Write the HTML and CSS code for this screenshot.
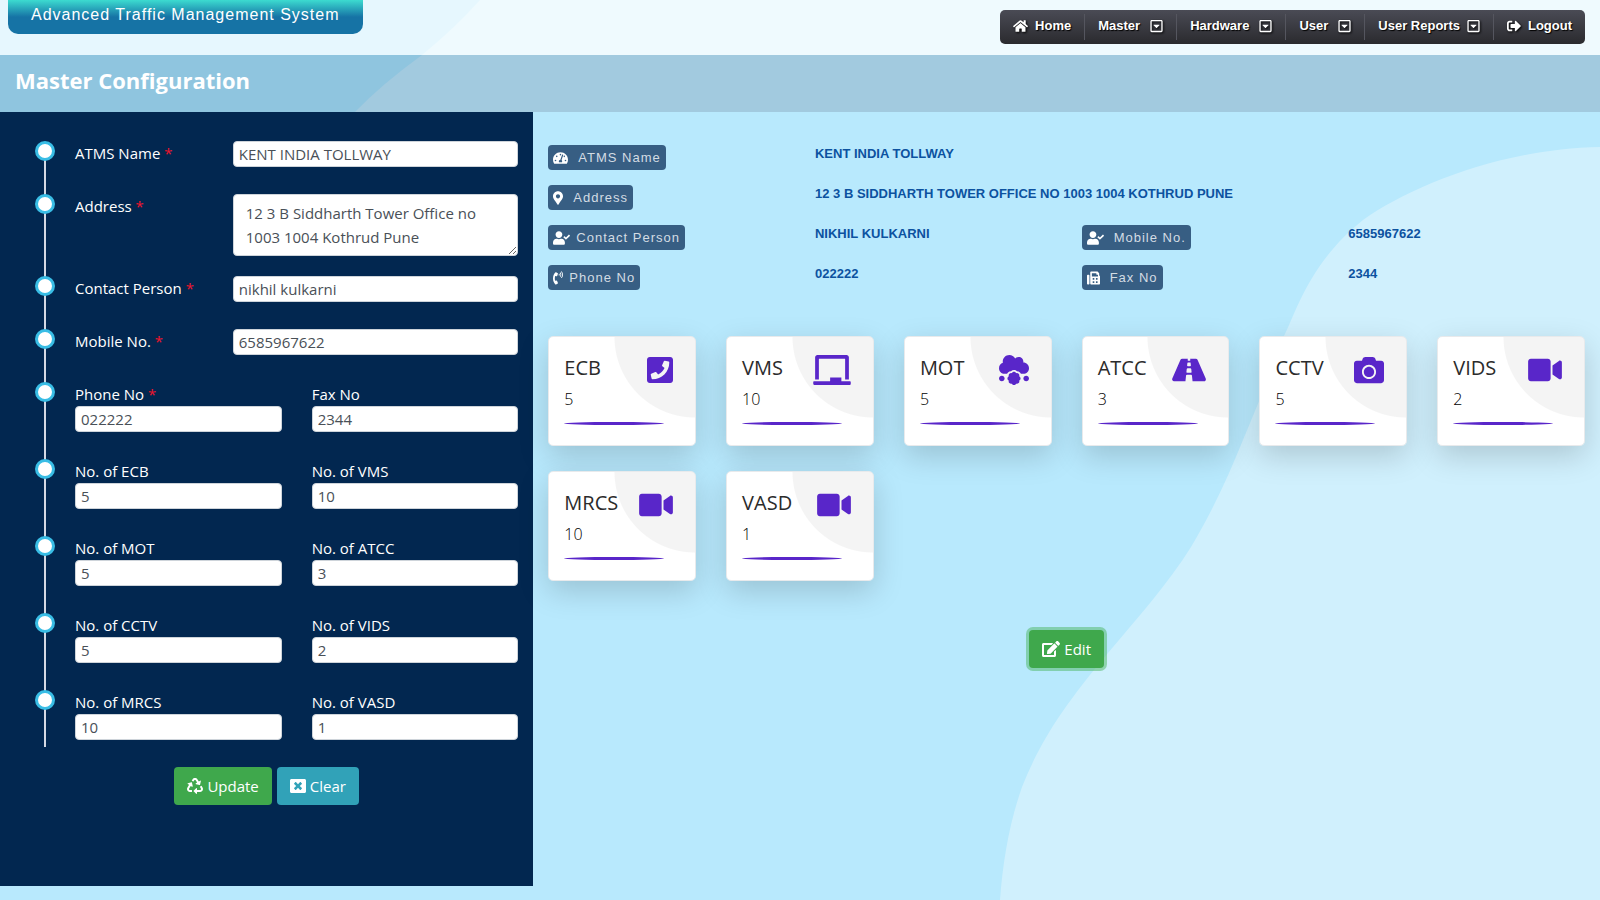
FILE: index.html
```html
<!DOCTYPE html>
<html lang="en">
<head>
<meta charset="utf-8">
<title>Master Configuration</title>
<link rel="stylesheet" href="styles.css">
</head>
<body>
<svg class="sprite" aria-hidden="true">
  <symbol id="i-home" viewBox="0 0 576 512"><path d="M280.37 148.26L96 300.11V464a16 16 0 0 0 16 16l112.06-.29a16 16 0 0 0 15.92-16V368a16 16 0 0 1 16-16h64a16 16 0 0 1 16 16v95.64a16 16 0 0 0 16 16.05L464 480a16 16 0 0 0 16-16V300L295.67 148.26a12.19 12.19 0 0 0-15.3 0zM571.6 251.47L488 182.56V44.05a12 12 0 0 0-12-12h-56a12 12 0 0 0-12 12v72.61L318.47 43a48 48 0 0 0-61 0L4.34 251.47a12 12 0 0 0-1.6 16.9l25.5 31A12 12 0 0 0 45.15 301l235.22-193.74a12.19 12.19 0 0 1 15.3 0L530.9 301a12 12 0 0 0 16.9-1.6l25.5-31a12 12 0 0 0-1.7-16.93z"/></symbol>
  <symbol id="i-caret" viewBox="0 0 448 512"><path d="M125.1 208h197.8c10.7 0 16.1 13 8.5 20.5l-98.9 98.3c-4.7 4.7-12.2 4.7-16.9 0l-98.9-98.3c-7.7-7.5-2.3-20.5 8.4-20.5zM448 80v352c0 26.5-21.5 48-48 48H48c-26.5 0-48-21.5-48-48V80c0-26.5 21.5-48 48-48h352c26.5 0 48 21.5 48 48zm-48 346V86c0-3.3-2.7-6-6-6H54c-3.3 0-6 2.7-6 6v340c0 3.3 2.7 6 6 6h340c3.3 0 6-2.7 6-6z"/></symbol>
  <symbol id="i-logout" viewBox="0 0 512 512"><path d="M497 273L329 441c-15 15-41 4.5-41-17v-96H152c-13.3 0-24-10.7-24-24v-96c0-13.3 10.7-24 24-24h136V88c0-21.4 25.9-32 41-17l168 168c9.3 9.4 9.3 24.6 0 34zM192 436v-40c0-6.6-5.4-12-12-12H96c-17.7 0-32-14.3-32-32V160c0-17.7 14.3-32 32-32h84c6.6 0 12-5.4 12-12V76c0-6.6-5.4-12-12-12H96c-53 0-96 43-96 96v192c0 53 43 96 96 96h84c6.6 0 12-5.4 12-12z"/></symbol>
  <symbol id="i-gauge" viewBox="0 0 576 512"><path d="M288 32C128.94 32 0 160.94 0 320c0 52.8 14.25 102.26 39.06 144.8 5.61 9.62 16.3 15.2 27.44 15.2h443c11.14 0 21.83-5.58 27.44-15.2C561.75 422.26 576 372.8 576 320c0-159.06-128.94-288-288-288zm0 64c14.71 0 26.58 10.13 30.32 23.65-1.11 2.26-2.64 4.23-3.45 6.67l-9.22 27.67c-5.13 3.49-10.97 6.01-17.64 6.01-17.67 0-32-14.33-32-32S270.33 96 288 96zM96 384c-17.67 0-32-14.33-32-32s14.33-32 32-32 32 14.33 32 32-14.33 32-32 32zm48-160c-17.67 0-32-14.33-32-32s14.33-32 32-32 32 14.33 32 32-14.33 32-32 32zm246.77-72.41l-61.33 184C343.13 347.33 352 364.54 352 384c0 11.72-3.38 22.55-8.88 32H232.88c-5.5-9.45-8.88-20.28-8.88-32 0-33.94 26.5-61.43 59.9-63.59l61.34-184.01c4.17-12.56 17.73-19.45 30.36-15.17 12.57 4.19 19.35 17.79 15.17 30.36zm14.66 57.2l15.52-46.55c3.47-1.29 7.13-2.23 11.05-2.23 17.67 0 32 14.33 32 32s-14.33 32-32 32c-11.38-.01-20.89-6.28-26.57-15.22zM480 384c-17.67 0-32-14.33-32-32s14.33-32 32-32 32 14.33 32 32-14.33 32-32 32z"/></symbol>
  <symbol id="i-marker" viewBox="0 0 384 512"><path d="M172.268 501.67C26.97 291.031 0 269.413 0 192 0 85.961 85.961 0 192 0s192 85.961 192 192c0 77.413-26.97 99.031-172.268 309.67-9.535 13.774-29.93 13.773-39.464 0zM192 272c44.183 0 80-35.817 80-80s-35.817-80-80-80-80 35.817-80 80 35.817 80 80 80z"/></symbol>
  <symbol id="i-user" viewBox="0 0 640 512"><path d="M224 256c70.7 0 128-57.3 128-128S294.7 0 224 0 96 57.3 96 128s57.3 128 128 128zm89.6 32h-16.7c-22.2 10.2-46.9 16-72.9 16s-50.6-5.8-72.9-16h-16.7C60.2 288 0 348.2 0 422.4V464c0 26.5 21.5 48 48 48h352c26.5 0 48-21.5 48-48v-41.6c0-74.2-60.2-134.4-134.4-134.4zm323-128.4l-27.8-28.1c-4.6-4.7-12.1-4.7-16.8-.1l-104.8 104-45.5-45.8c-4.6-4.7-12.1-4.7-16.8-.1l-28.1 27.9c-4.7 4.6-4.7 12.1-.1 16.8l81.7 82.3c4.6 4.7 12.1 4.7 16.8.1l141.3-140.2c4.6-4.7 4.7-12.2.1-16.8z"/></symbol>
  <symbol id="i-phone" viewBox="0 0 384 512"><path d="M97.333 506.966c-129.874-129.874-129.681-340.252 0-469.933 5.698-5.698 14.527-6.632 21.263-2.422l64.817 40.513a17.187 17.187 0 0 1 6.849 20.958l-32.408 81.021a17.188 17.188 0 0 1-17.669 10.719l-55.81-5.58c-21.051 58.261-20.612 122.471 0 179.515l55.811-5.581a17.188 17.188 0 0 1 17.669 10.719l32.408 81.022a17.188 17.188 0 0 1-6.849 20.958l-64.817 40.513a17.19 17.19 0 0 1-21.265-2.422zM247.126 95.473c11.832 20.047 11.832 45.008 0 65.055-3.95 6.693-13.108 7.959-18.718 2.581l-5.975-5.726c-3.911-3.748-4.793-9.622-2.261-14.41a32.063 32.063 0 0 0 0-29.945c-2.533-4.788-1.65-10.662 2.261-14.41l5.975-5.726c5.61-5.378 14.768-4.112 18.718 2.581zm91.787-91.187c60.14 71.604 60.092 175.882 0 247.428-4.474 5.327-12.53 5.746-17.552.933l-5.798-5.557c-4.56-4.371-4.977-11.529-.93-16.379 49.687-59.538 49.646-145.933 0-205.422-4.047-4.85-3.631-12.008.93-16.379l5.798-5.557c5.022-4.813 13.078-4.394 17.552.933zm-45.972 44.941c36.05 46.322 36.108 111.149 0 157.546-4.39 5.641-12.697 6.251-17.856 1.304l-5.818-5.579c-4.4-4.219-4.998-11.095-1.285-15.931 26.536-34.564 26.534-82.572 0-117.134-3.713-4.836-3.115-11.711 1.285-15.931l5.818-5.579c5.159-4.947 13.466-4.337 17.856 1.304z"/></symbol>
  <symbol id="i-fax" viewBox="0 0 512 512"><path fill-rule="evenodd" d="M64 128H32c-17.67 0-32 14.33-32 32v320c0 17.67 14.33 32 32 32h32c17.67 0 32-14.33 32-32V160c0-17.67-14.33-32-32-32zm416 32V77.25c0-8.49-3.37-16.62-9.37-22.63L425.37 9.37c-6-6-14.14-9.37-22.63-9.37H160c-17.67 0-32 14.33-32 32v448c0 17.67 14.33 32 32 32h320c17.67 0 32-14.33 32-32V192c0-17.67-14.33-32-32-32zM224 384h64v64h-64zM224 256h64v64h-64zM352 384h64v64h-64zM352 256h64v64h-64zM192 64h176v48c0 9 7 16 16 16h48v64H192z"/></symbol>
  <symbol id="i-ecb" viewBox="0 0 448 512"><path d="M400 32H48C21.49 32 0 53.49 0 80v352c0 26.51 21.49 48 48 48h352c26.51 0 48-21.49 48-48V80c0-26.51-21.49-48-48-48zM94 416c-7.033 0-13.057-4.873-14.616-11.627l-14.998-65a15 15 0 0 1 8.707-17.16l69.998-29.999a15 15 0 0 1 17.518 4.289l30.997 37.885c48.944-22.963 88.297-62.858 110.781-110.78l-37.886-30.997a15.001 15.001 0 0 1-4.289-17.518l30-69.998a15 15 0 0 1 17.16-8.707l65 14.998A14.997 14.997 0 0 1 384 126c0 160.292-129.945 290-290 290z"/></symbol>
  <symbol id="i-board" viewBox="0 0 640 512"><path d="M96 64h448v352h64V40c0-22.06-17.94-40-40-40H72C49.94 0 32 17.94 32 40v376h64V64zm528 384H480v-64H288v64H16c-8.84 0-16 7.16-16 16v32c0 8.84 7.16 16 16 16h608c8.84 0 16-7.16 16-16v-32c0-8.84-7.16-16-16-16z"/></symbol>
  <symbol id="i-cloud" viewBox="0 0 512 512"><path d="M48 352c-26.5 0-48 21.5-48 48s21.5 48 48 48 48-21.5 48-48-21.5-48-48-48zm416 0c-26.5 0-48 21.5-48 48s21.5 48 48 48 48-21.5 48-48-21.5-48-48-48zm-119 11.1c4.6-14.5 1.6-30.8-9.8-42.3-11.5-11.5-27.8-14.4-42.3-9.9-7-13.5-20.7-23-36.9-23s-29.9 9.5-36.9 23c-14.5-4.6-30.8-1.6-42.3 9.9-11.5 11.5-14.4 27.8-9.9 42.3-13.5 7-23 20.7-23 36.9s9.5 29.9 23 36.9c-4.6 14.5-1.6 30.8 9.9 42.3 8.2 8.2 18.9 12.3 29.7 12.3 4.3 0 8.5-1.1 12.6-2.5 7 13.5 20.7 23 36.9 23s29.9-9.5 36.9-23c4.1 1.3 8.3 2.5 12.6 2.5 10.8 0 21.5-4.1 29.7-12.3 11.5-11.5 14.4-27.8 9.8-42.3 13.5-7 23-20.7 23-36.9s-9.5-29.9-23-36.9zM512 224c0-53-43-96-96-96-.6 0-1.1.2-1.6.2 1.1-5.2 1.6-10.6 1.6-16.2 0-44.2-35.8-80-80-80-24.6 0-46.3 11.3-61 28.8C256.4 24.8 219.3 0 176 0 114.1 0 64 50.1 64 112c0 7.3.8 14.3 2.1 21.2C27.8 145.8 0 181.5 0 224c0 53 43 96 96 96h43.4c3.6-8 8.4-15.4 14.8-21.8 13.5-13.5 31.5-21.1 50.8-21.3 13.5-13.2 31.7-20.9 51-20.9s37.5 7.7 51 20.9c19.3.2 37.3 7.8 50.8 21.3 6.4 6.4 11.3 13.8 14.8 21.8H416c53 0 96-43 96-96z"/></symbol>
  <symbol id="i-road" viewBox="0 0 576 512"><path d="M573.19 402.67l-139.79-320C428.43 71.29 417.6 64 405.68 64h-97.59l2.45 23.16c.5 4.72-3.21 8.84-7.96 8.84h-29.16c-4.75 0-8.46-4.12-7.96-8.84L267.91 64h-97.59c-11.93 0-22.76 7.29-27.73 18.67L2.8 402.67C-6.45 423.86 8.31 448 30.54 448h196.84l10.31-97.68c.86-8.14 7.72-14.32 15.91-14.32h68.8c8.19 0 15.05 6.18 15.91 14.32L348.62 448h196.84c22.23 0 36.99-24.14 27.73-45.33zM260.4 135.16a8 8 0 0 1 7.96-7.16h39.29c4.09 0 7.53 3.09 7.96 7.16l4.6 43.58c.75 7.09-4.81 13.26-11.93 13.26h-40.54c-7.13 0-12.68-6.17-11.93-13.26l4.59-43.58zM315.64 304h-55.29c-9.5 0-16.91-8.23-15.91-17.68l5.07-48c.86-8.14 7.72-14.32 15.91-14.32h45.15c8.19 0 15.05 6.18 15.91 14.32l5.07 48c1 9.45-6.41 17.68-15.91 17.68z"/></symbol>
  <symbol id="i-camera" viewBox="0 0 512 512"><path d="M512 144v288c0 26.5-21.5 48-48 48H48c-26.5 0-48-21.5-48-48V144c0-26.5 21.5-48 48-48h88l12.3-32.9c7-18.7 24.9-31.1 44.9-31.1h125.5c20 0 37.9 12.4 44.9 31.1L376 96h88c26.5 0 48 21.5 48 48zM376 288c0-66.2-53.8-120-120-120s-120 53.8-120 120 53.8 120 120 120 120-53.8 120-120zm-32 0c0 48.5-39.5 88-88 88s-88-39.5-88-88 39.5-88 88-88 88 39.5 88 88z"/></symbol>
  <symbol id="i-video" viewBox="0 0 576 512"><path d="M336.2 64H47.8C21.4 64 0 85.4 0 111.8v288.4C0 426.6 21.4 448 47.8 448h288.4c26.4 0 47.8-21.4 47.8-47.8V111.8c0-26.4-21.4-47.8-47.8-47.8zm189.4 37.7L416 177.3v157.4l109.6 75.5c21.2 14.6 50.4-.3 50.4-25.8V127.5c0-25.4-29.1-40.4-50.4-25.8z"/></symbol>
  <symbol id="i-edit" viewBox="0 0 576 512"><path d="M402.6 83.2l90.2 90.2c3.8 3.8 3.8 10 0 13.8L274.4 405.6l-92.8 10.3c-12.4 1.4-22.9-9.1-21.5-21.5l10.3-92.8L388.8 83.2c3.8-3.8 10-3.8 13.8 0zm162-22.9l-48.8-48.8c-15.2-15.2-39.9-15.2-55.2 0l-35.4 35.4c-3.8 3.8-3.8 10 0 13.8l90.2 90.2c3.8 3.8 10 3.8 13.8 0l35.4-35.4c15.2-15.3 15.2-40 0-55.2zM384 346.2V448H64V128h229.8c3.2 0 6.2-1.3 8.5-3.5l40-40c7.6-7.6 2.2-20.5-8.5-20.5H48C21.5 64 0 85.5 0 112v352c0 26.5 21.5 48 48 48h352c26.5 0 48-21.5 48-48V306.2c0-10.7-12.9-16-20.5-8.5l-40 40c-2.2 2.3-3.5 5.3-3.5 8.5z"/></symbol>
  <symbol id="i-recycle" viewBox="0 0 512 512"><path d="M184.561 261.903c3.232 13.997-12.123 24.635-24.068 17.168l-40.736-25.455-50.867 81.402C55.606 356.273 70.96 384 96.012 384H148c6.627 0 12 5.373 12 12v40c0 6.627-5.373 12-12 12H96.115c-75.334 0-121.302-83.048-81.408-146.88l50.822-81.388-40.725-25.448c-12.081-7.547-8.966-25.961 4.879-29.158l110.237-25.45c8.611-1.988 17.201 3.381 19.189 11.99l25.452 110.237zm98.561-182.915l41.289 66.076-40.74 25.457c-12.051 7.528-9 25.953 4.879 29.158l110.237 25.45c8.672 1.999 17.215-3.438 19.189-11.99l25.45-110.237c3.197-13.844-11.99-24.719-24.068-17.168l-40.687 25.424-41.263-66.082c-37.521-60.033-125.209-60.171-162.816 0l-17.963 28.766c-3.51 5.62-1.8 13.021 3.82 16.533l33.919 21.195c5.62 3.512 13.024 1.803 16.536-3.817l17.961-28.743c12.712-20.341 41.973-19.676 54.257-.022zM497.288 301.12l-27.515-44.065c-3.511-5.623-10.916-7.334-16.538-3.821l-33.861 21.159c-5.62 3.512-7.33 10.915-3.818 16.536l27.564 44.112c13.257 21.211-2.057 48.96-27.136 48.96H320V336.02c0-14.213-17.242-21.383-27.313-11.313l-80 79.981c-6.249 6.248-6.249 16.379 0 22.627l80 79.989C302.689 517.308 320 510.3 320 495.989V448h95.88c75.274 0 121.335-82.997 81.408-146.88z"/></symbol>
  <symbol id="i-close" viewBox="0 0 512 512"><path d="M464 32H48C21.5 32 0 53.5 0 80v352c0 26.5 21.5 48 48 48h416c26.5 0 48-21.5 48-48V80c0-26.5-21.5-48-48-48zm-83.6 290.5c4.8 4.8 4.8 12.6 0 17.4l-40.5 40.5c-4.8 4.8-12.6 4.8-17.4 0L256 313.3l-66.5 67.1c-4.8 4.8-12.6 4.8-17.4 0l-40.5-40.5c-4.8-4.8-4.8-12.6 0-17.4l67.1-66.5-67.1-66.5c-4.8-4.8-4.8-12.6 0-17.4l40.5-40.5c4.8-4.8 12.6-4.8 17.4 0l66.5 67.1 66.5-67.1c4.8-4.8 12.6-4.8 17.4 0l40.5 40.5c4.8 4.8 4.8 12.6 0 17.4L313.3 256l67.1 66.5z"/></symbol>
</svg>

<div class="masthead">
  <svg class="wave" viewBox="0 0 1600 112" preserveAspectRatio="none" aria-hidden="true"><path d="M480 0Q455 28 422 55Q382 84 355 112H1600V0Z"/></svg>
  <header class="topbar">
    <div class="brand">Advanced Traffic Management System</div>
    <nav class="menu">
      <a href="#"><svg class="ic w15"><use href="#i-home"/></svg>Home</a>
      <a href="#" class="drop">Master<svg class="ic w13"><use href="#i-caret"/></svg></a>
      <a href="#" class="drop">Hardware<svg class="ic w13"><use href="#i-caret"/></svg></a>
      <a href="#" class="drop">User<svg class="ic w13"><use href="#i-caret"/></svg></a>
      <a href="#">User Reports<svg class="ic w13"><use href="#i-caret"/></svg></a>
      <a href="#"><svg class="ic w14"><use href="#i-logout"/></svg>Logout</a>
    </nav>
  </header>
  <div class="titlebar"><h1>Master Configuration</h1></div>
</div>

<main class="content">
  <svg class="wave" viewBox="0 0 1600 788" preserveAspectRatio="none" aria-hidden="true"><path d="M1600 35C1500 37 1410 75 1363 108C1310 150 1296 200 1284 224C1272 258 1258 292 1243 328C1228 365 1212 400 1191 435C1168 472 1138 505 1108 541C1062 596 1040 630 1022 675C1009 712 1003 750 1000 788H1600Z"/></svg>

  <form class="panel">
    <ul class="timeline">
      <li class="line-row"><label for="name">ATMS Name <span class="req">*</span></label><div class="cell"><input id="name" type="text" value="KENT INDIA TOLLWAY"></div></li>
      <li class="line-row"><label for="addr">Address <span class="req">*</span></label><div class="cell"><textarea id="addr" rows="2">12 3 B Siddharth Tower Office no 1003 1004 Kothrud Pune</textarea></div></li>
      <li class="line-row"><label for="person">Contact Person <span class="req">*</span></label><div class="cell"><input id="person" type="text" value="nikhil kulkarni"></div></li>
      <li class="line-row"><label for="mobile">Mobile No. <span class="req">*</span></label><div class="cell"><input id="mobile" type="text" value="6585967622"></div></li>
      <li class="pair-row"><div class="cell"><label for="phone">Phone No <span class="req">*</span></label><input id="phone" type="text" value="022222"></div><div class="cell"><label for="fax">Fax No</label><input id="fax" type="text" value="2344"></div></li>
      <li class="pair-row"><div class="cell"><label for="ecb">No. of ECB</label><input id="ecb" type="text" value="5"></div><div class="cell"><label for="vms">No. of VMS</label><input id="vms" type="text" value="10"></div></li>
      <li class="pair-row"><div class="cell"><label for="mot">No. of MOT</label><input id="mot" type="text" value="5"></div><div class="cell"><label for="atcc">No. of ATCC</label><input id="atcc" type="text" value="3"></div></li>
      <li class="pair-row"><div class="cell"><label for="cctv">No. of CCTV</label><input id="cctv" type="text" value="5"></div><div class="cell"><label for="vids">No. of VIDS</label><input id="vids" type="text" value="2"></div></li>
      <li class="pair-row"><div class="cell"><label for="mrcs">No. of MRCS</label><input id="mrcs" type="text" value="10"></div><div class="cell"><label for="vasd">No. of VASD</label><input id="vasd" type="text" value="1"></div></li>
    </ul>
    <div class="actions">
      <button type="button" class="btn green"><svg class="ic w16"><use href="#i-recycle"/></svg>Update</button>
      <button type="button" class="btn teal"><svg class="ic w16"><use href="#i-close"/></svg>Clear</button>
    </div>
  </form>

  <section class="overview">
    <dl class="facts">
      <dt><span class="badge wide"><svg class="ic w15"><use href="#i-gauge"/></svg>ATMS Name</span></dt><dd class="span">KENT INDIA TOLLWAY</dd>
      <dt><span class="badge wide"><svg class="ic w10"><use href="#i-marker"/></svg>Address</span></dt><dd class="span">12 3 B SIDDHARTH TOWER OFFICE NO 1003 1004 KOTHRUD PUNE</dd>
      <dt><span class="badge"><svg class="ic w17"><use href="#i-user"/></svg>Contact Person</span></dt><dd>NIKHIL KULKARNI</dd>
      <dt><span class="badge wide"><svg class="ic w17"><use href="#i-user"/></svg>Mobile No.</span></dt><dd>6585967622</dd>
      <dt><span class="badge"><svg class="ic w10"><use href="#i-phone"/></svg>Phone No</span></dt><dd>022222</dd>
      <dt><span class="badge wide"><svg class="ic w13"><use href="#i-fax"/></svg>Fax No</span></dt><dd>2344</dd>
    </dl>
    <div class="cards">
      <article class="card"><div class="text"><h2>ECB</h2><p>5</p></div><svg class="pic p26"><use href="#i-ecb"/></svg><span class="bar"></span></article>
      <article class="card"><div class="text"><h2>VMS</h2><p>10</p></div><svg class="pic p38"><use href="#i-board"/></svg><span class="bar"></span></article>
      <article class="card"><div class="text"><h2>MOT</h2><p>5</p></div><svg class="pic p30"><use href="#i-cloud"/></svg><span class="bar"></span></article>
      <article class="card"><div class="text"><h2>ATCC</h2><p>3</p></div><svg class="pic p34"><use href="#i-road"/></svg><span class="bar"></span></article>
      <article class="card"><div class="text"><h2>CCTV</h2><p>5</p></div><svg class="pic p30"><use href="#i-camera"/></svg><span class="bar"></span></article>
      <article class="card"><div class="text"><h2>VIDS</h2><p>2</p></div><svg class="pic p34"><use href="#i-video"/></svg><span class="bar"></span></article>
      <article class="card"><div class="text"><h2>MRCS</h2><p>10</p></div><svg class="pic p34"><use href="#i-video"/></svg><span class="bar"></span></article>
      <article class="card"><div class="text"><h2>VASD</h2><p>1</p></div><svg class="pic p34"><use href="#i-video"/></svg><span class="bar"></span></article>
    </div>
    <button type="button" class="btn green ring"><svg class="ic w18"><use href="#i-edit"/></svg>Edit</button>
  </section>
</main>
</body>
</html>
```
FILE: styles.css
```css
*, *::before { box-sizing: border-box; }

body {
  margin: 0;
  min-height: 100vh;
  display: flex;
  flex-direction: column;
  background: #b8e9fd;
  color: #212529;
  font: 15px/24px "Segoe UI", "Open Sans", sans-serif;
}

h1, h2, p, ul, dl, dd { margin: 0; padding: 0; }

.sprite { position: absolute; width: 0; height: 0; }

.wave {
  position: absolute;
  inset: 0;
  width: 100%;
  height: 100%;
  fill: #d0f0fd;
}

.ic { flex: none; height: 16px; fill: currentColor; }
.w10 { width: 10px; }
.w13 { width: 13px; }
.w14 { width: 14px; }
.w15 { width: 15px; }
.w16 { width: 16px; }
.w17 { width: 17px; }
.w18 { width: 18px; }

/* Header */
.masthead { position: relative; }

.topbar {
  position: relative;
  display: flex;
  justify-content: space-between;
  align-items: flex-start;
  height: 55px;
  padding: 0 15px 0 8px;
  background: rgba(255, 255, 255, .65);
}

.brand {
  padding: 0 23px 5px;
  border-radius: 0 0 10px 10px;
  background: linear-gradient(#3cdbd0 0, #1673a5 50%);
  color: #fff;
  font: 16px/29px "Liberation Sans", Arial, sans-serif;
  letter-spacing: 1px;
}

.menu {
  display: flex;
  align-items: center;
  height: 34px;
  margin-top: 10px;
  border-radius: 5px;
  background: linear-gradient(#4a4b55, #2a2a2e);
}

.menu a {
  display: flex;
  align-items: center;
  gap: 7px;
  height: 26px;
  padding: 0 13px 2px;
  border-left: 1px solid #55565f;
  color: #fff;
  font: bold 13px/24px "Liberation Sans", Arial, sans-serif;
  text-decoration: none;
  text-shadow: 1px 1px 1px #000;
}
.menu a:first-child { border-left: 0; }
.menu a.drop { gap: 10px; }
.menu .ic { height: 14px; filter: drop-shadow(1px 1px 1px #000); }

.titlebar { position: relative; padding: 9px 15px 16px; background: rgba(0, 69, 117, .22); }
.titlebar h1 { color: #fff; font-size: 22px; font-weight: 700; line-height: 32px; }

/* Body */
.content {
  position: relative;
  flex: 1;
  display: grid;
  grid-template-columns: 1fr 2fr;
  padding-bottom: 14px;
}

.panel { position: relative; padding: 29px 0 20px; background: #022750; }

.timeline { position: relative; padding-left: 60px; list-style: none; }
.timeline::before {
  content: "";
  position: absolute;
  left: 44px;
  top: 10px;
  bottom: 0;
  width: 2px;
  background: #d4d9e4;
}
.timeline li { position: relative; display: grid; padding-bottom: 20px; }
.timeline li:last-child { padding-bottom: 0; }
.timeline li::before {
  content: "";
  position: absolute;
  left: -25px;
  width: 20px;
  height: 20px;
  border: 3px solid #39bde5;
  border-radius: 50%;
  background: #fff;
}

.line-row { grid-template-columns: 1fr 2fr; }
.line-row > label, .cell { padding: 0 15px; }
.pair-row { grid-template-columns: 1fr 1fr; }
.timeline label { display: block; color: #fff; white-space: nowrap; }
.req { color: #f0142c; }

input, textarea {
  display: block;
  width: 100%;
  border: 1px solid #ced4da;
  border-radius: 4px;
  background: #fff;
  color: #495057;
  font: inherit;
}
input { height: 26px; margin-bottom: 7px; padding: 0 5px; }
textarea { height: 62px; padding: 6px 12px; resize: vertical; overflow: hidden; }

.actions { display: flex; justify-content: center; gap: 5px; margin-top: 20px; }

.btn {
  display: flex;
  align-items: center;
  gap: 4px;
  height: 38px;
  padding: 0 13px;
  border: 0;
  border-radius: 4px;
  color: #fff;
  font: inherit;
}
.green { background: #3fa84c; }
.teal { background: #31a2b8; }
.ring { align-self: center; margin-top: 49px; box-shadow: 0 0 0 3px rgba(76, 181, 98, .5); }

/* Overview */
.overview { position: relative; display: flex; flex-direction: column; padding-top: 29px; }

.facts {
  display: grid;
  grid-template-columns: repeat(4, 1fr);
  grid-auto-rows: 40px;
  font: bold 13px/26px "Liberation Sans", Arial, sans-serif;
}
.facts dt, .facts dd { padding: 0 15px; color: #0c52a0; white-space: nowrap; }
.facts dt { padding-top: 4px; }
.facts .span { grid-column: span 3; }

.badge {
  display: flex;
  align-items: center;
  gap: 6px;
  width: fit-content;
  height: 25px;
  padding: 0 5px;
  border-radius: 4px;
  background: #375e83;
  color: #d3dce4;
  font-weight: 400;
  letter-spacing: 1px;
}
.badge.wide { gap: 10px; }
.badge .ic { height: 14px; color: #fff; }

.cards {
  display: grid;
  grid-template-columns: repeat(6, 1fr);
  gap: 25px 30px;
  margin-top: 35px;
  padding: 0 15px;
}

.card {
  display: grid;
  grid-template-columns: 1fr auto;
  align-content: start;
  height: 110px;
  padding: 18px 22px 0 15px;
  border: 1px solid #e8eaec;
  border-radius: 5px;
  background: radial-gradient(circle at 100% 0, #f4f4f4 80px, #fff 81px);
  box-shadow: 0 10px 30px rgba(0, 0, 0, .17);
}
.card h2 { font-size: 20px; font-weight: 500; line-height: 26px; color: #2b2b2b; white-space: nowrap; }
.card p { margin-top: 6px; color: #000; font-size: 16px; line-height: 24px; font-weight: 300; }
.text { width: 0; }
.pic { height: 30px; fill: #5926c9; }
.p26 { width: 26px; }
.p30 { width: 30px; }
.p34 { width: 34px; }
.p38 { width: 38px; }
.bar {
  grid-column: 1 / -1;
  width: 100px;
  height: 3px;
  margin-top: 11px;
  border-radius: 50%;
  background: #5926c9;
}
```
